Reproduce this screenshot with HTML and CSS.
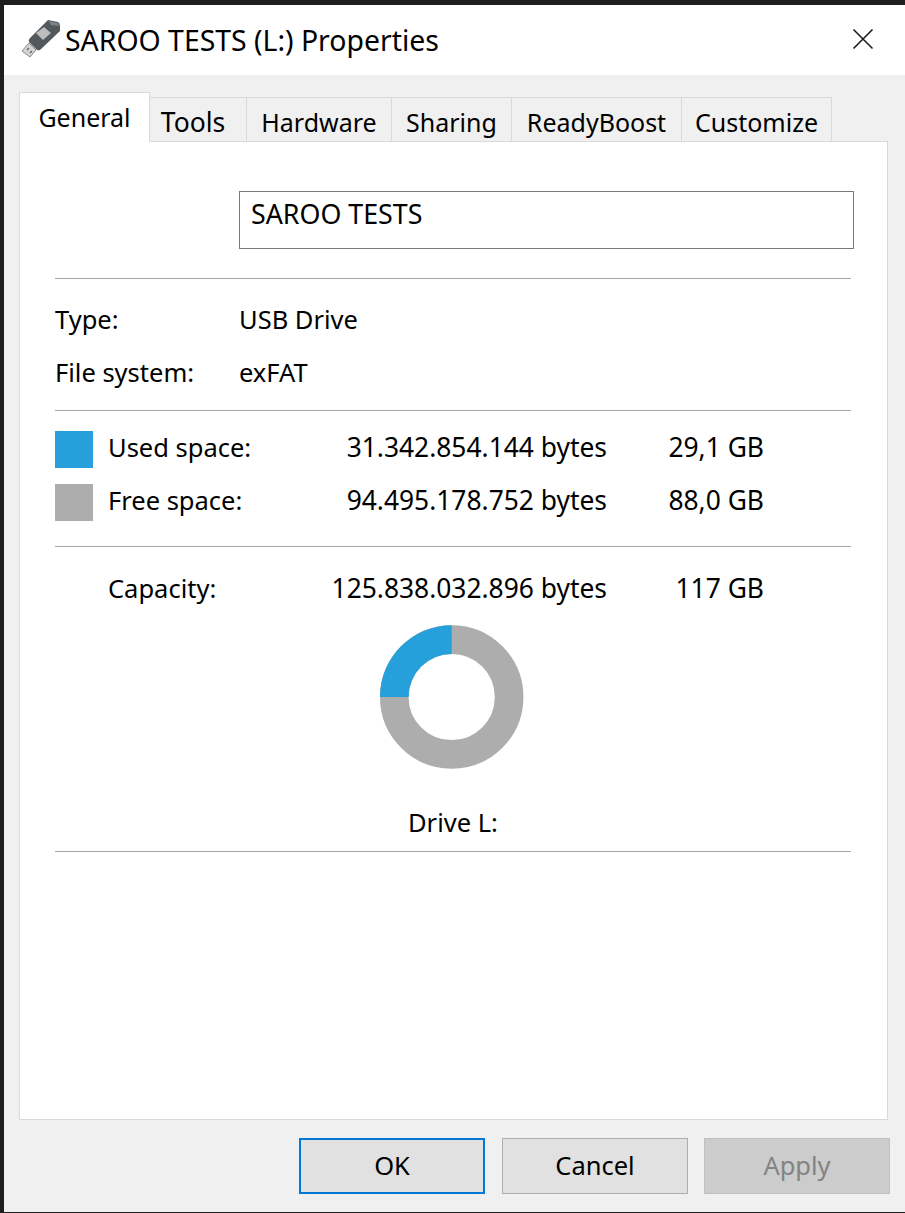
FILE: index.html
```html
<!DOCTYPE html>
<html lang="en">
<head>
    <meta charset="UTF-8">
    <title>SAROO TESTS (L:) Properties</title>
    <link rel="stylesheet" href="styles.css">
</head>
<body>
    <div class="window">
        <div class="titlebar">
            <svg class="usb-icon" width="42" height="42" viewBox="0 0 42 42">
                <path d="M11 25l7 7-6 7-8-6z" fill="#d4d4d4" stroke="#8a8a8a" stroke-width="1"/>
                <path d="M9 32l2-2M12 35l2-2" stroke="#666" stroke-width="1.5" fill="none"/>
                <path d="M30 2L40 4Q42 5 42 8L42 13 22 32Q20 33 18 31L11 24Q10 22 12 20z" fill="#52585c"/>
                <path d="M31 3L40 5 41 8 33 7z" fill="#7d8387"/>
                <path d="M18 15l8-6 7 6-8 7z" fill="#bcbcbc"/>
            </svg>
            <span class="title">SAROO TESTS (L:) Properties</span>
            <svg class="close" width="22" height="22" viewBox="0 0 22 22">
                <path d="M1.5 1.5l19 19M20.5 1.5l-19 19" stroke="#1c1c1c" stroke-width="1.6" fill="none"/>
            </svg>
        </div>

        <div class="content">
            <div class="tabs">
                <div class="tab active">General</div>
                <div class="tab tools">Tools</div>
                <div class="tab hardware">Hardware</div>
                <div class="tab sharing">Sharing</div>
                <div class="tab boost">ReadyBoost</div>
                <div class="tab custom">Customize</div>
            </div>

            <div class="panel">
                <div class="name-row">
                    <div class="name-input">SAROO TESTS</div>
                </div>
                <hr class="divider first">

                <div class="info-row"><span class="info-label">Type:</span><span class="info-value">USB Drive</span></div>
                <div class="info-row"><span class="info-label">File system:</span><span class="info-value">exFAT</span></div>
                <hr class="divider info-end">

                <div class="space-row">
                    <span class="swatch used"></span><span class="cell">Used space:</span>
                    <span class="cell bytes">31.342.854.144 bytes</span><span class="cell gb">29,1 GB</span>
                </div>
                <div class="space-row">
                    <span class="swatch free"></span><span class="cell">Free space:</span>
                    <span class="cell bytes">94.495.178.752 bytes</span><span class="cell gb">88,0 GB</span>
                </div>
                <hr class="divider space-end">

                <div class="space-row capacity">
                    <span></span><span class="cell">Capacity:</span>
                    <span class="cell bytes">125.838.032.896 bytes</span><span class="cell gb">117 GB</span>
                </div>

                <div class="donut-wrap">
                    <svg width="144" height="145" viewBox="0 0 144 145">
                        <circle cx="71.7" cy="72" r="57.4" fill="none" stroke="#adadad" stroke-width="28.6"/>
                        <path d="M71.7 .3A71.7 71.7 0 0 0 0 72H28.6A43.1 43.1 0 0 1 71.7 28.9z" fill="#26a0da"/>
                    </svg>
                </div>
                <div class="drive-label">Drive L:</div>
                <hr class="divider last">
            </div>

            <div class="buttons">
                <div class="btn default">OK</div>
                <div class="btn">Cancel</div>
                <div class="btn disabled">Apply</div>
            </div>
        </div>
    </div>
</body>
</html>
```

FILE: styles.css
```css
/* properties dialog */
html, body {
    margin: 0;
    height: 100%;
    overflow: hidden;
}
body {
    background-color: #1f1f1f;
    font-family: "Noto Sans", "Open Sans", sans-serif;
    font-size: 25.5px;
    color: #000;
}
.window {
    box-sizing: border-box;
    margin: 5px 0 0 4px;
    height: 1207px;
    background-color: #f0f0f0;
    display: flex;
    flex-direction: column;
}
.titlebar {
    height: 70px;
    background-color: #fff;
    display: flex;
    align-items: center;
    padding-left: 14px;
    flex-shrink: 0;
}
.usb-icon {
    margin-top: -2px;
    margin-right: 5px;
}
.title {
    flex: 1;
    font-size: 28.4px;
    margin-top: -1px;
}
.close {
    margin-right: 31px;
    margin-top: -2px;
}
.content {
    padding: 17px 0 0 15px;
    display: flex;
    flex-direction: column;
    flex: 1;
}

/* tabs */
.tabs {
    display: flex;
    align-items: flex-end;
    height: 49px;
}
.tab {
    box-sizing: border-box;
    height: 44px;
    border: 1px solid #d9d9d9;
    border-left: none;
    border-bottom: none;
    display: flex;
    align-items: center;
    justify-content: center;
    padding-top: 4px;
    font-size: 25px;
}
.tab.active {
    width: 131px;
    height: 50px;
    margin-bottom: -1px;
    background-color: #fff;
    border: 1px solid #d9d9d9;
    border-bottom: none;
    padding-top: 0;
    padding-bottom: 2px;
    position: relative;
    z-index: 1;
}
.tools { width: 97px; padding-right: 10px; font-size: 26.5px; }
.hardware { width: 145px; }
.sharing { width: 120px; }
.boost { width: 170px; }
.custom { width: 150px; }

/* main panel */
.panel {
    box-sizing: border-box;
    width: 869px;
    height: 979px;
    background-color: #fff;
    border: 1px solid #d9d9d9;
    padding: 49px 0 0 35px;
}
.name-row {
    padding-left: 184px;
}
.name-input {
    box-sizing: border-box;
    width: 615px;
    height: 58px;
    border: 1px solid #7a7a7a;
    padding: 4px 11px;
    line-height: 36px;
    font-size: 26.8px;
}
.divider {
    border: none;
    height: 1px;
    background-color: #a6a6a6;
    margin: 0;
    width: 796px;
}
.first { margin-top: 29px; }
.info-row {
    display: flex;
    height: 53px;
    align-items: center;
}
.first + .info-row { margin-top: 15px; }
.info-label { width: 184px; margin-top: -4px; }
.info-value { margin-top: -4px; }
.info-end { margin-top: 10px; }
.space-row {
    display: grid;
    grid-template-columns: 53px 210px 289px 157px;
    height: 53px;
    align-items: center;
}
.cell { margin-top: -5px; }
.capacity .cell { margin-top: -1px; }
.bytes, .gb { text-align: right; }
.bytes { font-size: 26.4px; }
.gb { font-size: 26.4px; }
.swatch {
    width: 38px;
    height: 37px;
}
.used { background-color: #26a0da; }
.free { background-color: #adadad; }
.info-end + .space-row { margin-top: 12px; }
.space-end { margin-top: 17px; }
.capacity { margin-top: 15px; }
.donut-wrap {
    margin-top: 10px;
    padding-left: 325px;
    height: 145px;
}
.drive-label {
    margin-top: 30px;
    padding-left: 353px;
    line-height: 44px;
}
.last { margin-top: 7px; }

/* bottom buttons */
.buttons {
    display: flex;
    margin-top: 18px;
    padding-left: 280px;
}
.btn {
    box-sizing: border-box;
    flex-shrink: 0;
    width: 186px;
    height: 56px;
    background-color: #e1e1e1;
    border: 1px solid #adadad;
    display: flex;
    align-items: center;
    justify-content: center;
    margin-right: 16px;
    padding-bottom: 2px;
}
.default { border: 2px solid #0078d7; margin-right: 17px; }
.disabled {
    background-color: #ccc;
    border-color: #bfbfbf;
    color: #838383;
    margin-right: 0;
}
```
